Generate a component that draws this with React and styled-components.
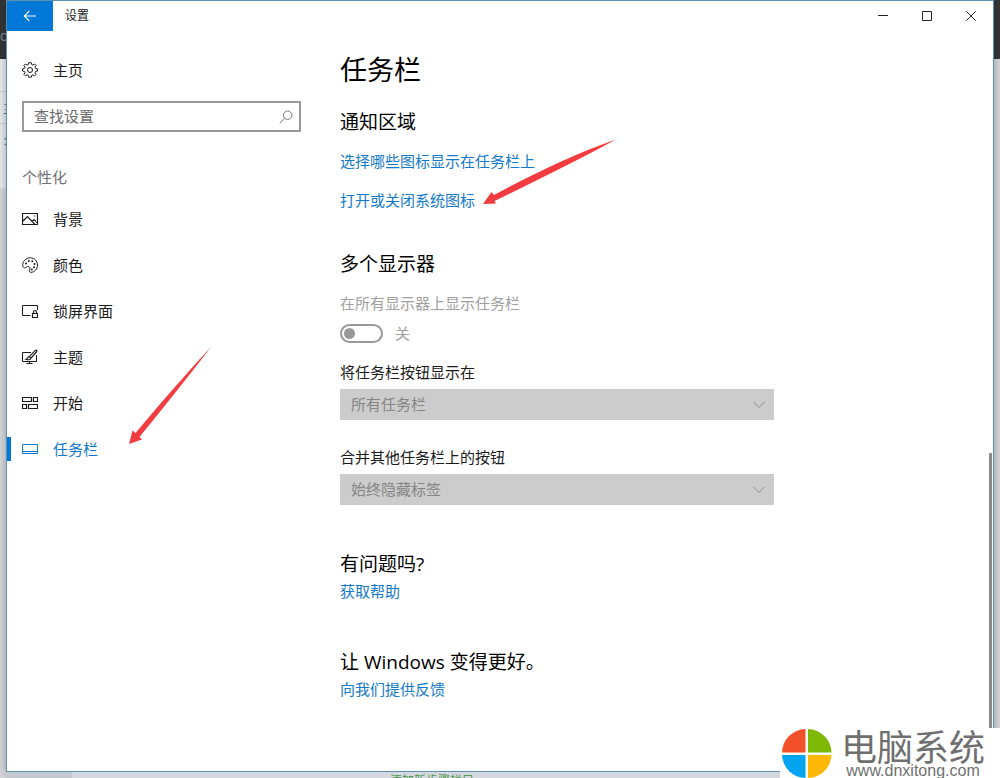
import React from 'react';
import styled, { createGlobalStyle, css } from 'styled-components';

const navItems = [
  { id: 'background', label: '背景', icon: <PictureIcon /> },
  { id: 'colors', label: '颜色', icon: <PaletteIcon /> },
  { id: 'lockscreen', label: '锁屏界面', icon: <LockScreenIcon /> },
  { id: 'themes', label: '主题', icon: <ThemeIcon /> },
  { id: 'start', label: '开始', icon: <StartIcon /> },
  { id: 'taskbar', label: '任务栏', icon: <TaskbarIcon />, active: true },
];

export default function App() {
  return (
    <Desktop>
      <GlobalStyle />
      <LeftPeek aria-hidden="true">
        <PeekDark>d</PeekDark>
        <PeekMark>主</PeekMark>
        <PeekMark>么</PeekMark>
      </LeftPeek>

      <Window>
        <TitleBar>
          <BackButton aria-label="返回">
            <svg width="14" height="12" viewBox="0 0 14 12" fill="none" stroke="currentColor" strokeWidth="1.2">
              <path d="M13 6H1.5M6.2 1.2 1.4 6l4.8 4.8" />
            </svg>
          </BackButton>
          <WindowName>设置</WindowName>
          <CaptionButton aria-label="最小化">
            <CaptionIcon><path d="M0 4.500h10" /></CaptionIcon>
          </CaptionButton>
          <CaptionButton aria-label="最大化">
            <CaptionIcon><path d="M.5.5h9v9h-9z" /></CaptionIcon>
          </CaptionButton>
          <CaptionButton aria-label="关闭">
            <CaptionIcon><path d="m.4.4 9.2 9.2M9.6.4.4 9.6" /></CaptionIcon>
          </CaptionButton>
        </TitleBar>

        <Body>
          <Sidebar>
            <HomeLink href="#home"><GearIcon />主页</HomeLink>
            <SearchBox>
              <SearchInput type="text" placeholder="查找设置" aria-label="查找设置" />
              <SearchIcon />
            </SearchBox>
            <GroupName>个性化</GroupName>
            <nav>
              {navItems.map((item) => (
                <NavItem key={item.id} href={`#${item.id}`} $active={item.active}>
                  {item.icon}
                  {item.label}
                  {item.active && (
                    <NavArrow width="84" height="100" viewBox="0 0 84 100" aria-hidden="true">
                      <path d="M1 98 4.500 84.500 7.500 87C31 59 57 29 83 1 60 31 36 61 11.500 91L14 93.500Z" />
                    </NavArrow>
                  )}
                </NavItem>
              ))}
            </nav>
          </Sidebar>

          <Content>
            <PageTitle>任务栏</PageTitle>

            <Section>
              <SectionTitle>通知区域</SectionTitle>
              <LinkList>
                <TextLink href="#select-icons">选择哪些图标显示在任务栏上</TextLink>
                <TextLink href="#system-icons">
                  打开或关闭系统图标
                  <LinkArrow width="136" height="68" viewBox="0 0 136 68" aria-hidden="true">
                    <path d="M1 66 9.500 54 12 57C51 36 92 16 134 1.500 94 23 54 43 12.500 63L14 65.500Z" />
                  </LinkArrow>
                </TextLink>
              </LinkList>
            </Section>

            <Section>
              <SectionTitle>多个显示器</SectionTitle>
              <ToggleLabel htmlFor="all-displays">在所有显示器上显示任务栏</ToggleLabel>
              <ToggleRow>
                <Toggle id="all-displays" type="checkbox" role="switch" disabled />
                <span>关</span>
              </ToggleRow>
              <SelectField id="show-on" label="将任务栏按钮显示在" value="所有任务栏" />
              <SelectField id="combine" label="合并其他任务栏上的按钮" value="始终隐藏标签" />
            </Section>

            <FooterSection>
              <SectionTitle>有问题吗?</SectionTitle>
              <TextLink href="#help">获取帮助</TextLink>
            </FooterSection>

            <FooterSection>
              <SectionTitle>让 Windows 变得更好。</SectionTitle>
              <TextLink href="#feedback">向我们提供反馈</TextLink>
            </FooterSection>
          </Content>

          <ScrollTrack>
            <ScrollThumb />
          </ScrollTrack>
        </Body>
      </Window>

      <BottomPeek>添加新步骤栏目</BottomPeek>

      <Watermark>
        <svg width="50" height="50" viewBox="0 0 50 50" aria-hidden="true">
          <path fill="#f2512b" d="M23.500 1v23.500H0A24 24 0 0 1 23.500 1Z" />
          <path fill="#80b905" d="M26 1v23.500h23.500A24 24 0 0 0 26 1Z" />
          <path fill="#05a4f0" d="M23.500 50V27H0a24 24 0 0 0 23.500 23Z" />
          <path fill="#ffb904" d="M26 50V27h23.500A24 24 0 0 1 26 50Z" />
        </svg>
        <WatermarkText>
          <SiteName>电脑系统</SiteName>
          <SiteUrl>www.dnxitong.com</SiteUrl>
        </WatermarkText>
      </Watermark>
    </Desktop>
  );
}

function SelectField({ id, label, value }) {
  return (
    <Field>
      <FieldLabel htmlFor={id}>{label}</FieldLabel>
      <SelectWrap>
        <Select id={id} disabled>
          <option>{value}</option>
        </Select>
        <svg width="12" height="8" viewBox="0 0 12 8" fill="none" stroke="#8c8c8c" aria-hidden="true">
          <path d="m.5 1 5.500 5.500L11.500 1" />
        </svg>
      </SelectWrap>
    </Field>
  );
}

/* ===== icons ===== */
function GearIcon() {
  return (
    <Icon>
      <path d="m6.700.7-.4 1.900-1.200.5-1.700-1.100-1.500 1.500L3 5.200l-.5 1.200-1.900.4v2.300l1.900.4.5 1.200-1.100 1.700 1.500 1.500 1.700-1.100 1.200.5.4 1.900H9.300l.4-1.900 1.200-.5 1.700 1.100 1.500-1.500-1.100-1.700.5-1.200 1.900-.4V6.800l-1.900-.4L13 5.200l1.100-1.700L12.600 2l-1.700 1.100-1.200-.5L9.300.7Z" />
      <circle cx="8" cy="8" r="2.500" />
    </Icon>
  );
}

function PictureIcon() {
  return (
    <Icon>
      <path d="M.5 2.500h15v11H.5zM.5 10.500 5.500 5.500l7.500 8M10 10.500l2-2 3.500 3.500" strokeWidth="1.2" />
      <path d="M12 5h1.200" />
    </Icon>
  );
}

function PaletteIcon() {
  return (
    <Icon>
      <path d="M.7 8.700C.4 4.500 3.800.9 8.200.8c4.100 0 7.300 3.200 7.300 7.200 0 4.100-3 7.300-6.400 7.300-1.600 0-2.200-1.300-1.600-2.500.7-1.500.3-3.100-1.300-3.200-1.500-.2-2.200 1.300-3.500 1.200C1.500 10.700.8 9.700.7 8.700Z" />
      <g fill="currentColor" stroke="none">
        <circle cx="4" cy="6.500" r="1" />
        <circle cx="6.800" cy="4" r="1" />
        <circle cx="10.300" cy="4.200" r="1" />
        <circle cx="12.500" cy="7" r="1" />
        <circle cx="12" cy="10.200" r="1" />
        <circle cx="9.800" cy="12.400" r="1" />
      </g>
    </Icon>
  );
}

function LockScreenIcon() {
  return (
    <Icon>
      <path d="M8.500 12.500h-8v-10h15V7" />
      <path d="M10.500 10.500h5v4h-5zM11.500 10.500V9a1.500 1.500 0 0 1 3 0v1.500" strokeWidth="1.2" />
    </Icon>
  );
}

function ThemeIcon() {
  return (
    <Icon>
      <path d="M9 3.500H.5v9h14V6M7.500 12.500v2M4.500 14.500h6" />
      <path d="M14.500 1.300c.7.500.4 1.100-.1 1.700L9 9.200 7.300 7.700l5.800-6c.5-.5.900-.8 1.400-.4ZM7.300 7.700C5.200 7.600 5.800 9.800 4 10.300c2 .8 4.600.6 5-1.100" strokeWidth="1.2" />
    </Icon>
  );
}

function StartIcon() {
  return (
    <Icon>
      <path d="M.5 2.500h9v4h-9zM11.500 2.500h4v4h-4zM.5 9.500h4v4h-4zM6.500 9.500h9v4h-9z" strokeWidth="1.2" />
    </Icon>
  );
}

function TaskbarIcon() {
  return (
    <Icon>
      <path d="M.5 3.500h15v9H.5zM.5 10.500h15" />
    </Icon>
  );
}

function SearchIcon() {
  return (
    <svg width="14" height="14" viewBox="0 0 14 14" fill="none" stroke="#777" aria-hidden="true">
      <circle cx="8.700" cy="5.200" r="4.200" />
      <path d="M5.700 8.200.8 13.200" />
    </svg>
  );
}

/* ===== styled ===== */
const GlobalStyle = createGlobalStyle`
  * {
    box-sizing: border-box;
  }

  body {
    margin: 0;
    font-family: 'Open Sans', 'Noto Sans CJK SC', sans-serif;
    font-size: 15px;
    line-height: 24px;
    color: #1a1a1a;
  }

  a {
    color: inherit;
    text-decoration: none;
  }

  button, input, select {
    font: inherit;
  }
`;

const Desktop = styled.div`
  position: relative;
  display: grid;
  grid-template-columns: 6px minmax(0, 1fr) 6px;
  grid-template-rows: minmax(0, 1fr) 6px;
  min-height: 100vh;
  overflow: hidden;
  background: linear-gradient(#333 59px, #d5d6d9 59px);
`;

const LeftPeek = styled.div`
  align-self: start;
  width: 6px;
  height: 188px;
  overflow: hidden;
  font-size: 14px;
  background: linear-gradient(#333 59px, #e8e9ec 59px);
`;

const PeekDark = styled.div`
  height: 59px;
  padding-top: 24px;
  color: #8a8a8a;
`;

const PeekMark = styled.div`
  height: 32px;
  padding: 4px 0 0 3px;
  border-top: 1px solid #d2d3d6;
  color: #3b7aa8;

  ${PeekDark} + & {
    margin-top: 32px;
  }
`;

const Window = styled.main`
  grid-column: 2;
  display: flex;
  flex-direction: column;
  background: #fff;
  border: 1px solid #5d8fae;
  box-shadow: 0 2px 8px rgba(0, 40, 70, 0.35);
`;

const TitleBar = styled.header`
  display: flex;
  height: 30px;
`;

const BackButton = styled.button`
  display: grid;
  place-items: center;
  width: 46px;
  padding: 0;
  border: 0;
  background: #0078d7;
  color: #fff;
`;

const WindowName = styled.div`
  flex: 1;
  padding-left: 12px;
  font-size: 12px;
  line-height: 30px;
`;

const CaptionButton = styled.button`
  display: grid;
  place-items: center;
  width: 44px;
  padding: 0;
  border: 0;
  background: transparent;
`;

const CaptionIcon = styled.svg.attrs({ viewBox: '0 0 10 10', 'aria-hidden': true })`
  width: 10px;
  height: 10px;
  fill: none;
  stroke: #222;
`;

const Body = styled.div`
  flex: 1;
  display: flex;
`;

const Sidebar = styled.aside`
  flex: 0 0 294px;
  padding-top: 23px;
`;

const Icon = styled.svg.attrs({ viewBox: '0 0 16 16', 'aria-hidden': true })`
  flex: none;
  width: 16px;
  height: 16px;
  fill: none;
  stroke: currentColor;
`;

const sideRow = css`
  display: flex;
  align-items: center;
  gap: 15px;
  padding-left: 15px;
`;

const HomeLink = styled.a`
  ${sideRow}
  height: 32px;
`;

const SearchBox = styled.div`
  display: flex;
  align-items: center;
  height: 31px;
  margin: 15px 0 0 15px;
  padding: 0 6px 0 10px;
  border: 2px solid #999;
`;

const SearchInput = styled.input`
  flex: 1;
  min-width: 0;
  height: 24px;
  padding: 0 0 1px;
  border: 0;
  outline: 0;
  background: transparent;

  &::placeholder {
    color: #6b6b6b;
    opacity: 1;
  }
`;

const GroupName = styled.h2`
  margin: 33px 0 7px 15px;
  font-size: 15px;
  line-height: 24px;
  font-weight: 400;
  color: #707070;
`;

const NavItem = styled.a`
  ${sideRow}
  position: relative;
  height: 46px;
  color: ${(p) => (p.$active ? '#0f78cc' : 'inherit')};

  &::before {
    content: '';
    display: ${(p) => (p.$active ? 'block' : 'none')};
    position: absolute;
    left: 0;
    top: 11px;
    width: 4px;
    height: 24px;
    background: #0078d7;
  }
`;

const NavArrow = styled.svg`
  position: absolute;
  left: 121px;
  bottom: 26px;
  fill: #f23c3f;
`;

const Content = styled.div`
  flex: 1;
  min-width: 0;
  padding: 19px 39px 39px;
`;

const PageTitle = styled.h1`
  margin: 0;
  font-size: 27px;
  line-height: 40px;
  font-weight: 400;
  color: #000;
`;

const Section = styled.section`
  margin-top: 17px;

  & + & {
    margin-top: 37px;
  }
`;

const FooterSection = styled.section`
  margin-top: 44px;
`;

const SectionTitle = styled.h2`
  margin: 0;
  font-size: 19px;
  line-height: 30px;
  font-weight: 400;
  color: #000;
`;

const LinkList = styled.div`
  display: flex;
  flex-direction: column;
  align-items: flex-start;
  gap: 15px;
  margin-top: 12px;
`;

const TextLink = styled.a`
  position: relative;
  display: inline-block;
  vertical-align: top;
  color: #147ac8;
`;

const LinkArrow = styled.svg`
  position: absolute;
  left: 142px;
  bottom: 6px;
  fill: #f23c3f;
`;

const ToggleLabel = styled.label`
  display: block;
  margin-top: 12px;
  color: #a0a0a0;
`;

const ToggleRow = styled.div`
  display: flex;
  align-items: center;
  gap: 12px;
  height: 20px;
  margin: 8px 0 17px;
  color: #a0a0a0;
`;

const Toggle = styled.input`
  appearance: none;
  display: flex;
  align-items: center;
  width: 43px;
  height: 19px;
  margin: 0;
  padding-left: 2px;
  border: 2px solid #999;
  border-radius: 10px;

  &::before {
    content: '';
    width: 11px;
    height: 11px;
    border-radius: 50%;
    background: #999;
  }
`;

const Field = styled.div`
  max-width: 434px;

  & + & {
    margin-top: 25px;
  }
`;

const FieldLabel = styled.label`
  display: block;
  margin-bottom: 5px;
`;

const SelectWrap = styled.div`
  position: relative;

  svg {
    position: absolute;
    right: 9px;
    top: 12px;
    pointer-events: none;
  }
`;

const Select = styled.select`
  appearance: none;
  display: block;
  width: 100%;
  height: 31px;
  padding: 0 32px 2px 11px;
  border: 0;
  border-radius: 0;
  background: #ccc;
  color: #858585;
  opacity: 1;
`;

const ScrollTrack = styled.div`
  display: flex;
  flex-direction: column;
  justify-content: flex-end;
  width: 3px;
  margin-right: 1px;
`;

const ScrollThumb = styled.div`
  flex: 0 0 43%;
  background: #8a8a8a;
`;

const BottomPeek = styled.div`
  grid-column: 2;
  height: 6px;
  padding-left: 384px;
  overflow: hidden;
  font-size: 12px;
  line-height: 18px;
  color: #4f9a4f;
  background: linear-gradient(90deg, #c3c9cf 66px, #d6d8df 66px);
`;

const Watermark = styled.div`
  position: absolute;
  right: 0;
  bottom: 0;
  display: flex;
  align-items: center;
  gap: 9px;
  width: 220px;
  height: 50px;
  padding-left: 2px;
  background: #fff;
`;

const WatermarkText = styled.div`
  display: flex;
  flex-direction: column;
  align-items: center;
  color: #6f6f6f;
  white-space: nowrap;
`;

const SiteName = styled.div`
  font-family: 'Noto Sans CJK SC', sans-serif;
  font-size: 36px;
  line-height: 35px;
`;

const SiteUrl = styled.div`
  font-family: 'Liberation Sans', sans-serif;
  font-size: 16px;
  line-height: 15px;
`;
